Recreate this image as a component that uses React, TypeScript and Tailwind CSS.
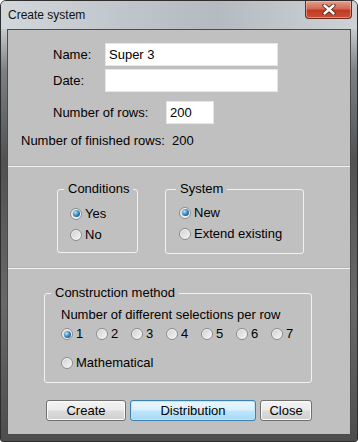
import React from 'react';

interface RadioProps {
  label: string;
  checked?: boolean;
  className?: string;
}

const Radio: React.FC<RadioProps> = ({ label, checked, className }) => (
  <div className={`flex items-center ${className ?? ''}`}>
    <span className="w-[12px] h-[12px] shrink-0 rounded-full border border-[#8c8c8c] bg-[linear-gradient(135deg,#cfcfcf,#f7f7f7)] shadow-[inset_0_0_0_1px_#f4f4f4] flex items-center justify-center">
      {checked && (
        <span className="w-[7px] h-[7px] rounded-full bg-[radial-gradient(circle_at_35%_35%,#b5e4fb,#2d7ab3_55%,#114676)]" />
      )}
    </span>
    <span className="ml-[3px]">{label}</span>
  </div>
);

const Separator = () => <div className="h-px bg-[#f2f2f2] shadow-[0_-1px_0_#b4b4b4]" />;

const CloseGlyph = () => (
  <svg width="14" height="11" viewBox="0 0 14 11">
    <path d="M2.5 1.5 L11.5 9.5 M11.5 1.5 L2.5 9.5" stroke="#5a2016" strokeWidth="4.2" strokeLinecap="round" />
    <path d="M2.5 1.5 L11.5 9.5 M11.5 1.5 L2.5 9.5" stroke="#ffffff" strokeWidth="2.4" strokeLinecap="round" />
  </svg>
);

export default function App() {
  const numbers = ['1', '2', '3', '4', '5', '6', '7'];

  return (
    <div className="w-[358px] h-[442px] flex flex-col border border-[#2e2e2e] rounded-t-[6px] rounded-b-[3px] overflow-hidden bg-[linear-gradient(to_bottom,#d3d8dc_0px,#c6cbcf_28px,#7d8083_70px,#4f5153_160px,#66686a_300px,#4c4d4e_442px)] font-['Liberation_Sans',Arial,sans-serif] text-[13px] leading-[16px] text-black">
      {/* Title bar */}
      <div className="h-[28px] shrink-0 flex items-start justify-between bg-[linear-gradient(to_right,#d2d7db,#bfc5ca_35%,#b4babf_60%,#cdd2d6)]">
        <span className="pl-[7px] pt-[6px] text-[12px] leading-[16px] text-[#111]">Create system</span>
        <button className="w-[47px] h-[18px] mr-[5px] rounded-b-[4px] border border-t-0 border-[#6d2a1d] bg-[linear-gradient(to_bottom,#e2a08f,#d06a55_45%,#c03b22_55%,#c9513a)] shadow-[inset_0_0_0_1px_rgba(255,210,200,0.45)] flex items-center justify-center">
          <CloseGlyph />
        </button>
      </div>

      {/* Client area */}
      <div className="flex-1 mx-[6px] mb-[6px] flex flex-col border border-[#4b4b4b] bg-[#c0c0c0]">
        <div className="pt-[13px] pb-[17px]">
          <div className="flex items-center ml-[45px]">
            <span className="w-[52px]">Name:</span>
            <input
              readOnly
              defaultValue="Super 3"
              className="h-[23px] w-[173px] bg-white border border-[#e4e6ea] px-[3px] outline-none"
            />
          </div>
          <div className="flex items-center ml-[45px] mt-[3px]">
            <span className="w-[52px]">Date:</span>
            <input
              readOnly
              defaultValue=""
              className="h-[23px] w-[173px] bg-white border border-[#e4e6ea] px-[3px] outline-none"
            />
          </div>
          <div className="flex items-center ml-[45px] mt-[9px]">
            <span className="w-[113px]">Number of rows:</span>
            <input
              readOnly
              defaultValue="200"
              className="h-[23px] w-[48px] bg-white border border-[#e4e6ea] px-[3px] outline-none"
            />
          </div>
          <div className="flex items-center ml-[13px] mt-[9px]">
            <span className="w-[151px]">Number of finished rows:</span>
            <span>200</span>
          </div>
        </div>

        <Separator />

        <div className="flex items-start pt-[14px] pb-[14px] pl-[49px] gap-[27px]">
          <fieldset className="w-[81px] border border-[#f2f2f2] rounded-[3px]">
            <legend className="ml-[6px] px-[4px]">Conditions</legend>
            <div className="pl-[12px] pt-[6px] pb-[7px]">
              <Radio label="Yes" checked className="h-[21px]" />
              <Radio label="No" className="h-[21px]" />
            </div>
          </fieldset>
          <fieldset className="w-[139px] border border-[#f2f2f2] rounded-[3px]">
            <legend className="ml-[10px] px-[4px]">System</legend>
            <div className="pl-[13px] pt-[5px] pb-[8px]">
              <Radio label="New" checked className="h-[21px]" />
              <Radio label="Extend existing" className="h-[22px]" />
            </div>
          </fieldset>
        </div>

        <Separator />

        <div className="pt-[16px] pl-[36px]">
          <fieldset className="w-[268px] border border-[#f2f2f2] rounded-[3px]">
            <legend className="ml-[6px] px-[4px]">Construction method</legend>
            <div className="pl-[16px] pt-[6px] pb-[9px]">
              <div>Number of different selections per row</div>
              <div className="flex h-[20px] mt-[1px]">
                {numbers.map(n => (
                  <Radio key={n} label={n} checked={n === '1'} className="w-[35px]" />
                ))}
              </div>
              <Radio label="Mathematical" className="h-[20px] mt-[9px]" />
            </div>
          </fieldset>
        </div>

        <div className="flex gap-[4px] ml-[38px] mt-[17px]">
          <button className="w-[80px] h-[21px] rounded-[3px] border border-[#707070] bg-[linear-gradient(to_bottom,#f4f4f4,#ebebeb_48%,#dcdcdc_52%,#cfcfcf)] shadow-[inset_0_0_0_1px_#fbfbfb]">
            Create
          </button>
          <button className="w-[126px] h-[21px] rounded-[3px] border border-[#3c7fb1] bg-[linear-gradient(to_bottom,#eaf6fd,#d9f0fc_48%,#bee6fd_52%,#a7d9f5)] shadow-[inset_0_0_0_1px_#bfe6f9]">
            Distribution
          </button>
          <button className="w-[52px] h-[21px] rounded-[3px] border border-[#707070] bg-[linear-gradient(to_bottom,#f4f4f4,#ebebeb_48%,#dcdcdc_52%,#cfcfcf)] shadow-[inset_0_0_0_1px_#fbfbfb]">
            Close
          </button>
        </div>
      </div>
    </div>
  );
}
